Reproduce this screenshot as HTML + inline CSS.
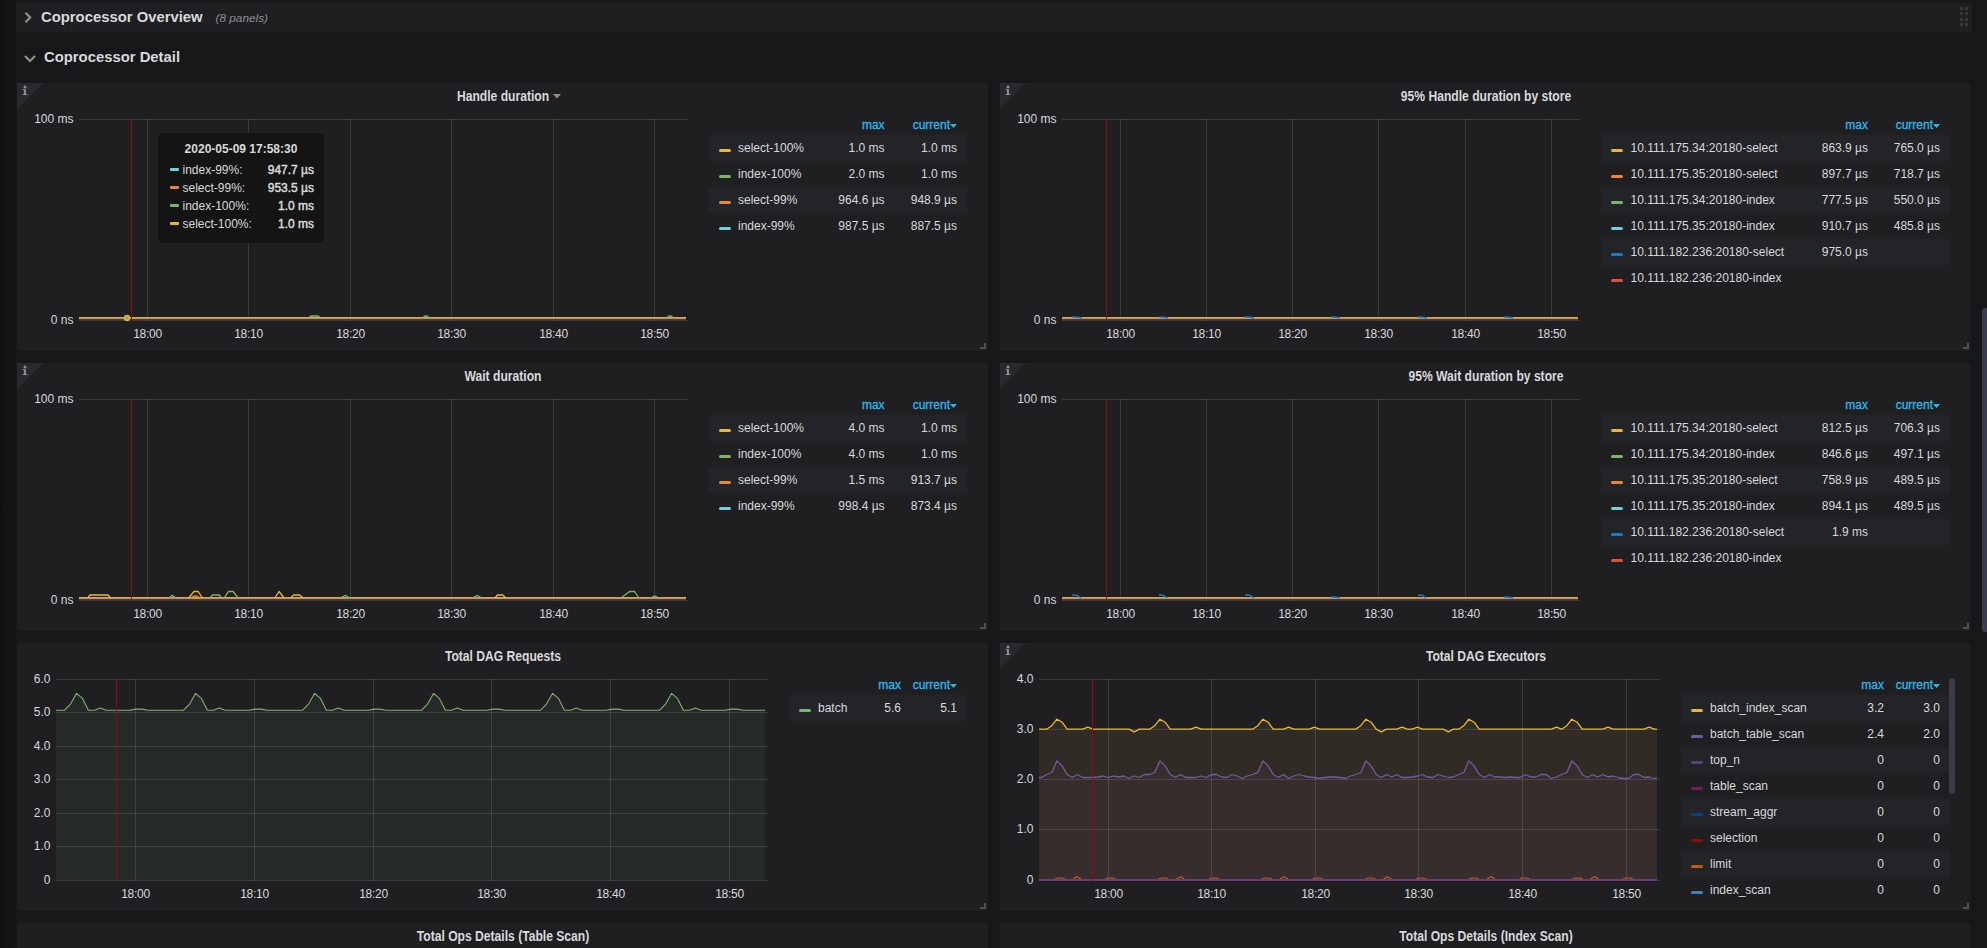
<!DOCTYPE html><html><head><meta charset="utf-8"><title>Grafana - Coprocessor</title><style>
html,body{margin:0;padding:0;width:1987px;height:948px;overflow:hidden;background:#161719;font-family:"Liberation Sans", sans-serif;}
.t{position:absolute;white-space:nowrap;line-height:1.2;}
.ax{letter-spacing:-0.3px;}
.panel{position:absolute;background:#1f1f22;border-radius:3px;}
svg{position:absolute;overflow:visible;}
</style></head><body>
<div style="position:absolute;left:0px;top:0px;width:16px;height:948px;background:linear-gradient(90deg,#0d0e0f 0px,#111214 3px,#141517 16px);"></div>
<div style="position:absolute;left:16px;top:3px;width:1956px;height:29px;background:#1f1f22;"></div>
<svg width="20" height="20" style="left:20px;top:8px"><polyline points="5.5,4.8 10.2,9.5 5.5,14.2" fill="none" stroke="#8e8e8e" stroke-width="2.2"/></svg>
<div class="t" style="left:40.5px;top:7.6px;font-size:15.3px;color:#d8d9da;font-weight:bold;transform:scaleX(0.97);transform-origin:left;">Coprocessor Overview</div>
<div class="t" style="left:215.5px;top:10.7px;font-size:11.8px;color:#8e8e8e;font-weight:normal;font-style:italic;">(8 panels)</div>
<div style="position:absolute;left:1960px;top:7px;width:3px;height:3px;background:#38383b;"></div>
<div style="position:absolute;left:1965px;top:7px;width:3px;height:3px;background:#38383b;"></div>
<div style="position:absolute;left:1960px;top:12px;width:3px;height:3px;background:#38383b;"></div>
<div style="position:absolute;left:1965px;top:12px;width:3px;height:3px;background:#38383b;"></div>
<div style="position:absolute;left:1960px;top:18px;width:3px;height:3px;background:#38383b;"></div>
<div style="position:absolute;left:1965px;top:18px;width:3px;height:3px;background:#38383b;"></div>
<div style="position:absolute;left:1960px;top:23px;width:3px;height:3px;background:#38383b;"></div>
<div style="position:absolute;left:1965px;top:23px;width:3px;height:3px;background:#38383b;"></div>
<svg width="20" height="20" style="left:20px;top:50px"><polyline points="5,6 10,11 15,6" fill="none" stroke="#8e8e8e" stroke-width="2.2"/></svg>
<div class="t" style="left:44.0px;top:47.6px;font-size:15.3px;color:#d8d9da;font-weight:bold;transform:scaleX(0.97);transform-origin:left;">Coprocessor Detail</div>
<div style="position:absolute;left:1982px;top:308px;width:6px;height:324px;background:#3b3d4e;border-radius:3px 0 0 3px;"></div>
<div class="panel" style="left:17px;top:83px;width:971px;height:268px;"></div>
<svg width="30" height="30" style="left:17px;top:83px"><polygon points="0,0 26,0 0,26" fill="#29292d"/><circle cx="8" cy="3.9" r="1.5" fill="#8e8e8e"/><path d="M5.7,6.2 H9 V10.9 H10.2 V12 H5.7 V10.9 H6.9 V7.3 H5.7 Z" fill="#8e8e8e"/></svg>
<svg width="8" height="8" style="left:980px;top:343px"><path d="M4,0 H6 V6 H0 V4 H4 Z" fill="#505053"/></svg>
<div class="t" style="left:202.5px;width:600px;text-align:center;top:87.7px;font-size:14px;color:#d8d9da;font-weight:bold;transform:scaleX(0.865);transform-origin:300px 0;">Handle duration</div>
<svg width="10" height="6" style="left:553px;top:94px"><polygon points="0,0 8,0 4,4.5" fill="#8e8e8e"/></svg>
<svg width="1987" height="948" style="left:0;top:0"><rect x="79" y="119" width="609" height="1" fill="rgba(255,255,255,0.12)"/><rect x="79" y="320" width="609" height="1" fill="rgba(255,255,255,0.12)"/><rect x="147" y="119" width="1" height="202" fill="rgba(255,255,255,0.12)"/><rect x="248" y="119" width="1" height="202" fill="rgba(255,255,255,0.12)"/><rect x="350" y="119" width="1" height="202" fill="rgba(255,255,255,0.12)"/><rect x="451" y="119" width="1" height="202" fill="rgba(255,255,255,0.12)"/><rect x="553" y="119" width="1" height="202" fill="rgba(255,255,255,0.12)"/><rect x="654" y="119" width="1" height="202" fill="rgba(255,255,255,0.12)"/><rect x="79" y="317" width="607" height="1" fill="#d1a65a"/><rect x="79" y="318" width="607" height="1" fill="#e3873e"/><rect x="79" y="319" width="607" height="1" fill="#3b4137"/><polyline points="308.0,318.0 311.0,316.0 318.0,316.0 321.0,318.0" fill="none" stroke="#7eb26d" stroke-width="1.3" stroke-linejoin="round"/><polyline points="422.0,318.0 425.0,316.0 427.0,316.0 430.0,318.0" fill="none" stroke="#7eb26d" stroke-width="1.3" stroke-linejoin="round"/><polyline points="666.0,318.0 669.0,316.0 671.0,316.0 674.0,318.0" fill="none" stroke="#7eb26d" stroke-width="1.3" stroke-linejoin="round"/><rect x="131" y="119" width="1" height="202" fill="#8b0e0e"/></svg>
<div class="t" style="right:1913.5px;top:111.8px;font-size:12px;color:#d8d9da;font-weight:normal;">100 ms</div>
<div class="t" style="right:1913.5px;top:313.3px;font-size:12px;color:#d8d9da;font-weight:normal;">0 ns</div>
<div class="t" style="left:-152.5px;width:600px;text-align:center;top:326.8px;font-size:12px;color:#d8d9da;font-weight:normal;letter-spacing:-0.3px;">18:00</div>
<div class="t" style="left:-51.5px;width:600px;text-align:center;top:326.8px;font-size:12px;color:#d8d9da;font-weight:normal;letter-spacing:-0.3px;">18:10</div>
<div class="t" style="left:50.5px;width:600px;text-align:center;top:326.8px;font-size:12px;color:#d8d9da;font-weight:normal;letter-spacing:-0.3px;">18:20</div>
<div class="t" style="left:151.5px;width:600px;text-align:center;top:326.8px;font-size:12px;color:#d8d9da;font-weight:normal;letter-spacing:-0.3px;">18:30</div>
<div class="t" style="left:253.5px;width:600px;text-align:center;top:326.8px;font-size:12px;color:#d8d9da;font-weight:normal;letter-spacing:-0.3px;">18:40</div>
<div class="t" style="left:354.5px;width:600px;text-align:center;top:326.8px;font-size:12px;color:#d8d9da;font-weight:normal;letter-spacing:-0.3px;">18:50</div>
<div class="t" style="right:1102.4px;top:117.8px;font-size:12px;color:#33b5e5;font-weight:normal;-webkit-text-stroke:0.3px #33b5e5;">max</div>
<div class="t" style="right:1037.0px;top:117.8px;font-size:12px;color:#33b5e5;font-weight:normal;-webkit-text-stroke:0.3px #33b5e5;">current</div>
<svg width="8" height="6" style="left:949.5px;top:123.5px"><polygon points="0,0 7,0 3.5,4" fill="#33b5e5"/></svg>
<div style="position:absolute;left:709px;top:135px;width:258px;height:26px;background:#232427;"></div>
<div style="position:absolute;left:719px;top:149px;width:12px;height:3px;background:#eab839;border-radius:1.5px;"></div>
<div class="t" style="left:738.0px;top:140.8px;font-size:12px;color:#d8d9da;font-weight:normal;">select-100%</div>
<div class="t" style="right:1102.4px;top:140.8px;font-size:12px;color:#d8d9da;font-weight:normal;">1.0 ms</div>
<div class="t" style="right:1030.0px;top:140.8px;font-size:12px;color:#d8d9da;font-weight:normal;">1.0 ms</div>
<div style="position:absolute;left:719px;top:175px;width:12px;height:3px;background:#7eb26d;border-radius:1.5px;"></div>
<div class="t" style="left:738.0px;top:166.8px;font-size:12px;color:#d8d9da;font-weight:normal;">index-100%</div>
<div class="t" style="right:1102.4px;top:166.8px;font-size:12px;color:#d8d9da;font-weight:normal;">2.0 ms</div>
<div class="t" style="right:1030.0px;top:166.8px;font-size:12px;color:#d8d9da;font-weight:normal;">1.0 ms</div>
<div style="position:absolute;left:709px;top:187px;width:258px;height:26px;background:#232427;"></div>
<div style="position:absolute;left:719px;top:201px;width:12px;height:3px;background:#ef843c;border-radius:1.5px;"></div>
<div class="t" style="left:738.0px;top:192.8px;font-size:12px;color:#d8d9da;font-weight:normal;">select-99%</div>
<div class="t" style="right:1102.4px;top:192.8px;font-size:12px;color:#d8d9da;font-weight:normal;">964.6 µs</div>
<div class="t" style="right:1030.0px;top:192.8px;font-size:12px;color:#d8d9da;font-weight:normal;">948.9 µs</div>
<div style="position:absolute;left:719px;top:227px;width:12px;height:3px;background:#6ed0e0;border-radius:1.5px;"></div>
<div class="t" style="left:738.0px;top:218.8px;font-size:12px;color:#d8d9da;font-weight:normal;">index-99%</div>
<div class="t" style="right:1102.4px;top:218.8px;font-size:12px;color:#d8d9da;font-weight:normal;">987.5 µs</div>
<div class="t" style="right:1030.0px;top:218.8px;font-size:12px;color:#d8d9da;font-weight:normal;">887.5 µs</div>
<div class="panel" style="left:17px;top:363px;width:971px;height:268px;"></div>
<svg width="30" height="30" style="left:17px;top:363px"><polygon points="0,0 26,0 0,26" fill="#29292d"/><circle cx="8" cy="3.9" r="1.5" fill="#8e8e8e"/><path d="M5.7,6.2 H9 V10.9 H10.2 V12 H5.7 V10.9 H6.9 V7.3 H5.7 Z" fill="#8e8e8e"/></svg>
<svg width="8" height="8" style="left:980px;top:623px"><path d="M4,0 H6 V6 H0 V4 H4 Z" fill="#505053"/></svg>
<div class="t" style="left:202.5px;width:600px;text-align:center;top:367.7px;font-size:14px;color:#d8d9da;font-weight:bold;transform:scaleX(0.865);transform-origin:300px 0;">Wait duration</div>
<svg width="1987" height="948" style="left:0;top:0"><rect x="79" y="399" width="609" height="1" fill="rgba(255,255,255,0.12)"/><rect x="79" y="600" width="609" height="1" fill="rgba(255,255,255,0.12)"/><rect x="147" y="399" width="1" height="202" fill="rgba(255,255,255,0.12)"/><rect x="248" y="399" width="1" height="202" fill="rgba(255,255,255,0.12)"/><rect x="350" y="399" width="1" height="202" fill="rgba(255,255,255,0.12)"/><rect x="451" y="399" width="1" height="202" fill="rgba(255,255,255,0.12)"/><rect x="553" y="399" width="1" height="202" fill="rgba(255,255,255,0.12)"/><rect x="654" y="399" width="1" height="202" fill="rgba(255,255,255,0.12)"/><rect x="79" y="597" width="607" height="1" fill="#d1a65a"/><rect x="79" y="598" width="607" height="1" fill="#e3873e"/><rect x="79" y="599" width="607" height="1" fill="#3b4137"/><polyline points="87.7,598.0 90.0,595.0 108.0,595.0 110.6,598.0" fill="none" stroke="#eab839" stroke-width="1.3" stroke-linejoin="round"/><polyline points="169.0,598.0 172.0,595.5 172.5,595.5 176.0,598.0" fill="none" stroke="#7eb26d" stroke-width="1.3" stroke-linejoin="round"/><polyline points="188.5,598.0 194.0,591.5 198.2,591.5 202.4,598.0" fill="none" stroke="#eab839" stroke-width="1.3" stroke-linejoin="round"/><polyline points="190.0,598.0 194.0,596.0 197.0,596.0 200.0,598.0" fill="none" stroke="#ef843c" stroke-width="1.3" stroke-linejoin="round"/><polyline points="209.7,598.0 212.7,595.0 219.3,595.0 221.7,598.0" fill="none" stroke="#7eb26d" stroke-width="1.3" stroke-linejoin="round"/><polyline points="224.2,598.0 228.4,591.5 233.2,591.5 238.0,598.0" fill="none" stroke="#7eb26d" stroke-width="1.3" stroke-linejoin="round"/><polyline points="274.9,598.0 279.1,591.5 279.1,591.5 284.0,598.0" fill="none" stroke="#eab839" stroke-width="1.3" stroke-linejoin="round"/><polyline points="290.6,598.0 293.6,595.0 299.6,595.0 303.3,598.0" fill="none" stroke="#eab839" stroke-width="1.3" stroke-linejoin="round"/><polyline points="340.0,598.0 345.0,595.5 345.5,595.5 350.0,598.0" fill="none" stroke="#7eb26d" stroke-width="1.3" stroke-linejoin="round"/><polyline points="472.0,598.0 477.0,595.5 477.5,595.5 482.0,598.0" fill="none" stroke="#7eb26d" stroke-width="1.3" stroke-linejoin="round"/><polyline points="495.0,598.0 497.4,595.0 502.8,595.0 505.8,598.0" fill="none" stroke="#eab839" stroke-width="1.3" stroke-linejoin="round"/><polyline points="620.9,598.0 629.6,591.5 634.5,591.5 639.0,598.0" fill="none" stroke="#7eb26d" stroke-width="1.3" stroke-linejoin="round"/><polyline points="650.0,598.0 654.5,596.0 655.0,596.0 659.0,598.0" fill="none" stroke="#7eb26d" stroke-width="1.3" stroke-linejoin="round"/><rect x="131" y="399" width="1" height="202" fill="#8b0e0e"/></svg>
<div class="t" style="right:1913.5px;top:391.8px;font-size:12px;color:#d8d9da;font-weight:normal;">100 ms</div>
<div class="t" style="right:1913.5px;top:593.3px;font-size:12px;color:#d8d9da;font-weight:normal;">0 ns</div>
<div class="t" style="left:-152.5px;width:600px;text-align:center;top:606.8px;font-size:12px;color:#d8d9da;font-weight:normal;letter-spacing:-0.3px;">18:00</div>
<div class="t" style="left:-51.5px;width:600px;text-align:center;top:606.8px;font-size:12px;color:#d8d9da;font-weight:normal;letter-spacing:-0.3px;">18:10</div>
<div class="t" style="left:50.5px;width:600px;text-align:center;top:606.8px;font-size:12px;color:#d8d9da;font-weight:normal;letter-spacing:-0.3px;">18:20</div>
<div class="t" style="left:151.5px;width:600px;text-align:center;top:606.8px;font-size:12px;color:#d8d9da;font-weight:normal;letter-spacing:-0.3px;">18:30</div>
<div class="t" style="left:253.5px;width:600px;text-align:center;top:606.8px;font-size:12px;color:#d8d9da;font-weight:normal;letter-spacing:-0.3px;">18:40</div>
<div class="t" style="left:354.5px;width:600px;text-align:center;top:606.8px;font-size:12px;color:#d8d9da;font-weight:normal;letter-spacing:-0.3px;">18:50</div>
<div class="t" style="right:1102.4px;top:397.8px;font-size:12px;color:#33b5e5;font-weight:normal;-webkit-text-stroke:0.3px #33b5e5;">max</div>
<div class="t" style="right:1037.0px;top:397.8px;font-size:12px;color:#33b5e5;font-weight:normal;-webkit-text-stroke:0.3px #33b5e5;">current</div>
<svg width="8" height="6" style="left:949.5px;top:403.5px"><polygon points="0,0 7,0 3.5,4" fill="#33b5e5"/></svg>
<div style="position:absolute;left:709px;top:415px;width:258px;height:26px;background:#232427;"></div>
<div style="position:absolute;left:719px;top:429px;width:12px;height:3px;background:#eab839;border-radius:1.5px;"></div>
<div class="t" style="left:738.0px;top:420.8px;font-size:12px;color:#d8d9da;font-weight:normal;">select-100%</div>
<div class="t" style="right:1102.4px;top:420.8px;font-size:12px;color:#d8d9da;font-weight:normal;">4.0 ms</div>
<div class="t" style="right:1030.0px;top:420.8px;font-size:12px;color:#d8d9da;font-weight:normal;">1.0 ms</div>
<div style="position:absolute;left:719px;top:455px;width:12px;height:3px;background:#7eb26d;border-radius:1.5px;"></div>
<div class="t" style="left:738.0px;top:446.8px;font-size:12px;color:#d8d9da;font-weight:normal;">index-100%</div>
<div class="t" style="right:1102.4px;top:446.8px;font-size:12px;color:#d8d9da;font-weight:normal;">4.0 ms</div>
<div class="t" style="right:1030.0px;top:446.8px;font-size:12px;color:#d8d9da;font-weight:normal;">1.0 ms</div>
<div style="position:absolute;left:709px;top:467px;width:258px;height:26px;background:#232427;"></div>
<div style="position:absolute;left:719px;top:481px;width:12px;height:3px;background:#ef843c;border-radius:1.5px;"></div>
<div class="t" style="left:738.0px;top:472.8px;font-size:12px;color:#d8d9da;font-weight:normal;">select-99%</div>
<div class="t" style="right:1102.4px;top:472.8px;font-size:12px;color:#d8d9da;font-weight:normal;">1.5 ms</div>
<div class="t" style="right:1030.0px;top:472.8px;font-size:12px;color:#d8d9da;font-weight:normal;">913.7 µs</div>
<div style="position:absolute;left:719px;top:507px;width:12px;height:3px;background:#6ed0e0;border-radius:1.5px;"></div>
<div class="t" style="left:738.0px;top:498.8px;font-size:12px;color:#d8d9da;font-weight:normal;">index-99%</div>
<div class="t" style="right:1102.4px;top:498.8px;font-size:12px;color:#d8d9da;font-weight:normal;">998.4 µs</div>
<div class="t" style="right:1030.0px;top:498.8px;font-size:12px;color:#d8d9da;font-weight:normal;">873.4 µs</div>
<div class="panel" style="left:1000px;top:83px;width:971px;height:268px;"></div>
<svg width="30" height="30" style="left:1000px;top:83px"><polygon points="0,0 26,0 0,26" fill="#29292d"/><circle cx="8" cy="3.9" r="1.5" fill="#8e8e8e"/><path d="M5.7,6.2 H9 V10.9 H10.2 V12 H5.7 V10.9 H6.9 V7.3 H5.7 Z" fill="#8e8e8e"/></svg>
<svg width="8" height="8" style="left:1963px;top:343px"><path d="M4,0 H6 V6 H0 V4 H4 Z" fill="#505053"/></svg>
<div class="t" style="left:1185.5px;width:600px;text-align:center;top:87.7px;font-size:14px;color:#d8d9da;font-weight:bold;transform:scaleX(0.865);transform-origin:300px 0;">95% Handle duration by store</div>
<svg width="1987" height="948" style="left:0;top:0"><rect x="1062" y="119" width="518" height="1" fill="rgba(255,255,255,0.12)"/><rect x="1062" y="320" width="518" height="1" fill="rgba(255,255,255,0.12)"/><rect x="1120" y="119" width="1" height="202" fill="rgba(255,255,255,0.12)"/><rect x="1206" y="119" width="1" height="202" fill="rgba(255,255,255,0.12)"/><rect x="1292" y="119" width="1" height="202" fill="rgba(255,255,255,0.12)"/><rect x="1378" y="119" width="1" height="202" fill="rgba(255,255,255,0.12)"/><rect x="1465" y="119" width="1" height="202" fill="rgba(255,255,255,0.12)"/><rect x="1551" y="119" width="1" height="202" fill="rgba(255,255,255,0.12)"/><rect x="1062" y="317" width="516" height="1" fill="#d1a65a"/><rect x="1062" y="318" width="516" height="1" fill="#e3873e"/><rect x="1062" y="319" width="516" height="1" fill="#3b4137"/><polyline points="1072.0,317.0 1077.5,317.3 1082.0,318.0" fill="none" stroke="#1f78c1" stroke-width="1.5" stroke-linejoin="round"/><polyline points="1159.0,317.0 1164.0,317.3 1168.0,318.0" fill="none" stroke="#1f78c1" stroke-width="1.5" stroke-linejoin="round"/><polyline points="1245.0,317.0 1250.0,317.3 1254.0,318.0" fill="none" stroke="#1f78c1" stroke-width="1.5" stroke-linejoin="round"/><polyline points="1331.0,317.0 1336.0,317.3 1340.0,318.0" fill="none" stroke="#1f78c1" stroke-width="1.5" stroke-linejoin="round"/><polyline points="1418.0,317.0 1423.0,317.3 1427.0,318.0" fill="none" stroke="#1f78c1" stroke-width="1.5" stroke-linejoin="round"/><polyline points="1504.0,317.0 1509.0,317.3 1513.0,318.0" fill="none" stroke="#1f78c1" stroke-width="1.5" stroke-linejoin="round"/><rect x="1106" y="119" width="1" height="202" fill="#8b0e0e"/></svg>
<div class="t" style="right:930.5px;top:111.8px;font-size:12px;color:#d8d9da;font-weight:normal;">100 ms</div>
<div class="t" style="right:930.5px;top:313.3px;font-size:12px;color:#d8d9da;font-weight:normal;">0 ns</div>
<div class="t" style="left:820.5px;width:600px;text-align:center;top:326.8px;font-size:12px;color:#d8d9da;font-weight:normal;letter-spacing:-0.3px;">18:00</div>
<div class="t" style="left:906.5px;width:600px;text-align:center;top:326.8px;font-size:12px;color:#d8d9da;font-weight:normal;letter-spacing:-0.3px;">18:10</div>
<div class="t" style="left:992.5px;width:600px;text-align:center;top:326.8px;font-size:12px;color:#d8d9da;font-weight:normal;letter-spacing:-0.3px;">18:20</div>
<div class="t" style="left:1078.5px;width:600px;text-align:center;top:326.8px;font-size:12px;color:#d8d9da;font-weight:normal;letter-spacing:-0.3px;">18:30</div>
<div class="t" style="left:1165.5px;width:600px;text-align:center;top:326.8px;font-size:12px;color:#d8d9da;font-weight:normal;letter-spacing:-0.3px;">18:40</div>
<div class="t" style="left:1251.5px;width:600px;text-align:center;top:326.8px;font-size:12px;color:#d8d9da;font-weight:normal;letter-spacing:-0.3px;">18:50</div>
<div class="t" style="right:119.0px;top:117.8px;font-size:12px;color:#33b5e5;font-weight:normal;-webkit-text-stroke:0.3px #33b5e5;">max</div>
<div class="t" style="right:54.0px;top:117.8px;font-size:12px;color:#33b5e5;font-weight:normal;-webkit-text-stroke:0.3px #33b5e5;">current</div>
<svg width="8" height="6" style="left:1932.5px;top:123.5px"><polygon points="0,0 7,0 3.5,4" fill="#33b5e5"/></svg>
<div style="position:absolute;left:1601px;top:135px;width:349px;height:26px;background:#232427;"></div>
<div style="position:absolute;left:1611px;top:149px;width:12px;height:3px;background:#eab839;border-radius:1.5px;"></div>
<div class="t" style="left:1630.5px;top:140.8px;font-size:12px;color:#d8d9da;font-weight:normal;">10.111.175.34:20180-select</div>
<div class="t" style="right:119.0px;top:140.8px;font-size:12px;color:#d8d9da;font-weight:normal;">863.9 µs</div>
<div class="t" style="right:47.0px;top:140.8px;font-size:12px;color:#d8d9da;font-weight:normal;">765.0 µs</div>
<div style="position:absolute;left:1611px;top:175px;width:12px;height:3px;background:#ef843c;border-radius:1.5px;"></div>
<div class="t" style="left:1630.5px;top:166.8px;font-size:12px;color:#d8d9da;font-weight:normal;">10.111.175.35:20180-select</div>
<div class="t" style="right:119.0px;top:166.8px;font-size:12px;color:#d8d9da;font-weight:normal;">897.7 µs</div>
<div class="t" style="right:47.0px;top:166.8px;font-size:12px;color:#d8d9da;font-weight:normal;">718.7 µs</div>
<div style="position:absolute;left:1601px;top:187px;width:349px;height:26px;background:#232427;"></div>
<div style="position:absolute;left:1611px;top:201px;width:12px;height:3px;background:#7eb26d;border-radius:1.5px;"></div>
<div class="t" style="left:1630.5px;top:192.8px;font-size:12px;color:#d8d9da;font-weight:normal;">10.111.175.34:20180-index</div>
<div class="t" style="right:119.0px;top:192.8px;font-size:12px;color:#d8d9da;font-weight:normal;">777.5 µs</div>
<div class="t" style="right:47.0px;top:192.8px;font-size:12px;color:#d8d9da;font-weight:normal;">550.0 µs</div>
<div style="position:absolute;left:1611px;top:227px;width:12px;height:3px;background:#6ed0e0;border-radius:1.5px;"></div>
<div class="t" style="left:1630.5px;top:218.8px;font-size:12px;color:#d8d9da;font-weight:normal;">10.111.175.35:20180-index</div>
<div class="t" style="right:119.0px;top:218.8px;font-size:12px;color:#d8d9da;font-weight:normal;">910.7 µs</div>
<div class="t" style="right:47.0px;top:218.8px;font-size:12px;color:#d8d9da;font-weight:normal;">485.8 µs</div>
<div style="position:absolute;left:1601px;top:239px;width:349px;height:26px;background:#232427;"></div>
<div style="position:absolute;left:1611px;top:253px;width:12px;height:3px;background:#1f78c1;border-radius:1.5px;"></div>
<div class="t" style="left:1630.5px;top:244.8px;font-size:12px;color:#d8d9da;font-weight:normal;">10.111.182.236:20180-select</div>
<div class="t" style="right:119.0px;top:244.8px;font-size:12px;color:#d8d9da;font-weight:normal;">975.0 µs</div>
<div style="position:absolute;left:1611px;top:279px;width:12px;height:3px;background:#e24d42;border-radius:1.5px;"></div>
<div class="t" style="left:1630.5px;top:270.8px;font-size:12px;color:#d8d9da;font-weight:normal;">10.111.182.236:20180-index</div>
<div class="panel" style="left:1000px;top:363px;width:971px;height:268px;"></div>
<svg width="30" height="30" style="left:1000px;top:363px"><polygon points="0,0 26,0 0,26" fill="#29292d"/><circle cx="8" cy="3.9" r="1.5" fill="#8e8e8e"/><path d="M5.7,6.2 H9 V10.9 H10.2 V12 H5.7 V10.9 H6.9 V7.3 H5.7 Z" fill="#8e8e8e"/></svg>
<svg width="8" height="8" style="left:1963px;top:623px"><path d="M4,0 H6 V6 H0 V4 H4 Z" fill="#505053"/></svg>
<div class="t" style="left:1185.5px;width:600px;text-align:center;top:367.7px;font-size:14px;color:#d8d9da;font-weight:bold;transform:scaleX(0.865);transform-origin:300px 0;">95% Wait duration by store</div>
<svg width="1987" height="948" style="left:0;top:0"><rect x="1062" y="399" width="518" height="1" fill="rgba(255,255,255,0.12)"/><rect x="1062" y="600" width="518" height="1" fill="rgba(255,255,255,0.12)"/><rect x="1120" y="399" width="1" height="202" fill="rgba(255,255,255,0.12)"/><rect x="1206" y="399" width="1" height="202" fill="rgba(255,255,255,0.12)"/><rect x="1292" y="399" width="1" height="202" fill="rgba(255,255,255,0.12)"/><rect x="1378" y="399" width="1" height="202" fill="rgba(255,255,255,0.12)"/><rect x="1465" y="399" width="1" height="202" fill="rgba(255,255,255,0.12)"/><rect x="1551" y="399" width="1" height="202" fill="rgba(255,255,255,0.12)"/><rect x="1062" y="597" width="516" height="1" fill="#d1a65a"/><rect x="1062" y="598" width="516" height="1" fill="#e3873e"/><rect x="1062" y="599" width="516" height="1" fill="#3b4137"/><polyline points="1072.0,595.0 1077.0,595.3 1081.0,598.0" fill="none" stroke="#1f78c1" stroke-width="1.5" stroke-linejoin="round"/><polyline points="1159.0,595.0 1163.4,595.3 1167.0,598.0" fill="none" stroke="#1f78c1" stroke-width="1.5" stroke-linejoin="round"/><polyline points="1245.0,595.0 1250.0,595.3 1254.0,598.0" fill="none" stroke="#1f78c1" stroke-width="1.5" stroke-linejoin="round"/><polyline points="1331.0,597.0 1336.0,597.3 1340.0,598.0" fill="none" stroke="#1f78c1" stroke-width="1.5" stroke-linejoin="round"/><polyline points="1418.0,595.0 1422.4,595.3 1426.0,598.0" fill="none" stroke="#1f78c1" stroke-width="1.5" stroke-linejoin="round"/><polyline points="1504.0,597.0 1509.0,597.3 1513.0,598.0" fill="none" stroke="#1f78c1" stroke-width="1.5" stroke-linejoin="round"/><rect x="1106" y="399" width="1" height="202" fill="#8b0e0e"/></svg>
<div class="t" style="right:930.5px;top:391.8px;font-size:12px;color:#d8d9da;font-weight:normal;">100 ms</div>
<div class="t" style="right:930.5px;top:593.3px;font-size:12px;color:#d8d9da;font-weight:normal;">0 ns</div>
<div class="t" style="left:820.5px;width:600px;text-align:center;top:606.8px;font-size:12px;color:#d8d9da;font-weight:normal;letter-spacing:-0.3px;">18:00</div>
<div class="t" style="left:906.5px;width:600px;text-align:center;top:606.8px;font-size:12px;color:#d8d9da;font-weight:normal;letter-spacing:-0.3px;">18:10</div>
<div class="t" style="left:992.5px;width:600px;text-align:center;top:606.8px;font-size:12px;color:#d8d9da;font-weight:normal;letter-spacing:-0.3px;">18:20</div>
<div class="t" style="left:1078.5px;width:600px;text-align:center;top:606.8px;font-size:12px;color:#d8d9da;font-weight:normal;letter-spacing:-0.3px;">18:30</div>
<div class="t" style="left:1165.5px;width:600px;text-align:center;top:606.8px;font-size:12px;color:#d8d9da;font-weight:normal;letter-spacing:-0.3px;">18:40</div>
<div class="t" style="left:1251.5px;width:600px;text-align:center;top:606.8px;font-size:12px;color:#d8d9da;font-weight:normal;letter-spacing:-0.3px;">18:50</div>
<div class="t" style="right:119.0px;top:397.8px;font-size:12px;color:#33b5e5;font-weight:normal;-webkit-text-stroke:0.3px #33b5e5;">max</div>
<div class="t" style="right:54.0px;top:397.8px;font-size:12px;color:#33b5e5;font-weight:normal;-webkit-text-stroke:0.3px #33b5e5;">current</div>
<svg width="8" height="6" style="left:1932.5px;top:403.5px"><polygon points="0,0 7,0 3.5,4" fill="#33b5e5"/></svg>
<div style="position:absolute;left:1601px;top:415px;width:349px;height:26px;background:#232427;"></div>
<div style="position:absolute;left:1611px;top:429px;width:12px;height:3px;background:#eab839;border-radius:1.5px;"></div>
<div class="t" style="left:1630.5px;top:420.8px;font-size:12px;color:#d8d9da;font-weight:normal;">10.111.175.34:20180-select</div>
<div class="t" style="right:119.0px;top:420.8px;font-size:12px;color:#d8d9da;font-weight:normal;">812.5 µs</div>
<div class="t" style="right:47.0px;top:420.8px;font-size:12px;color:#d8d9da;font-weight:normal;">706.3 µs</div>
<div style="position:absolute;left:1611px;top:455px;width:12px;height:3px;background:#7eb26d;border-radius:1.5px;"></div>
<div class="t" style="left:1630.5px;top:446.8px;font-size:12px;color:#d8d9da;font-weight:normal;">10.111.175.34:20180-index</div>
<div class="t" style="right:119.0px;top:446.8px;font-size:12px;color:#d8d9da;font-weight:normal;">846.6 µs</div>
<div class="t" style="right:47.0px;top:446.8px;font-size:12px;color:#d8d9da;font-weight:normal;">497.1 µs</div>
<div style="position:absolute;left:1601px;top:467px;width:349px;height:26px;background:#232427;"></div>
<div style="position:absolute;left:1611px;top:481px;width:12px;height:3px;background:#ef843c;border-radius:1.5px;"></div>
<div class="t" style="left:1630.5px;top:472.8px;font-size:12px;color:#d8d9da;font-weight:normal;">10.111.175.35:20180-select</div>
<div class="t" style="right:119.0px;top:472.8px;font-size:12px;color:#d8d9da;font-weight:normal;">758.9 µs</div>
<div class="t" style="right:47.0px;top:472.8px;font-size:12px;color:#d8d9da;font-weight:normal;">489.5 µs</div>
<div style="position:absolute;left:1611px;top:507px;width:12px;height:3px;background:#6ed0e0;border-radius:1.5px;"></div>
<div class="t" style="left:1630.5px;top:498.8px;font-size:12px;color:#d8d9da;font-weight:normal;">10.111.175.35:20180-index</div>
<div class="t" style="right:119.0px;top:498.8px;font-size:12px;color:#d8d9da;font-weight:normal;">894.1 µs</div>
<div class="t" style="right:47.0px;top:498.8px;font-size:12px;color:#d8d9da;font-weight:normal;">489.5 µs</div>
<div style="position:absolute;left:1601px;top:519px;width:349px;height:26px;background:#232427;"></div>
<div style="position:absolute;left:1611px;top:533px;width:12px;height:3px;background:#1f78c1;border-radius:1.5px;"></div>
<div class="t" style="left:1630.5px;top:524.8px;font-size:12px;color:#d8d9da;font-weight:normal;">10.111.182.236:20180-select</div>
<div class="t" style="right:119.0px;top:524.8px;font-size:12px;color:#d8d9da;font-weight:normal;">1.9 ms</div>
<div style="position:absolute;left:1611px;top:559px;width:12px;height:3px;background:#e24d42;border-radius:1.5px;"></div>
<div class="t" style="left:1630.5px;top:550.8px;font-size:12px;color:#d8d9da;font-weight:normal;">10.111.182.236:20180-index</div>
<div style="position:absolute;left:158px;top:133px;width:166px;height:110px;background:#141414;border-radius:5px;"></div>
<div class="t" style="left:-59.0px;width:600px;text-align:center;top:141.8px;font-size:12px;color:#d8d9da;font-weight:bold;">2020-05-09 17:58:30</div>
<div style="position:absolute;left:170px;top:168px;width:9px;height:3px;background:#6ed0e0;border-radius:1px;"></div>
<div class="t" style="left:182.5px;top:162.8px;font-size:12px;color:#d8d9da;font-weight:normal;">index-99%:</div>
<div class="t" style="right:1673.0px;top:162.8px;font-size:12px;color:#d8d9da;font-weight:normal;-webkit-text-stroke:0.45px #d8d9da;">947.7 µs</div>
<div style="position:absolute;left:170px;top:186px;width:9px;height:3px;background:#ef843c;border-radius:1px;"></div>
<div class="t" style="left:182.5px;top:180.8px;font-size:12px;color:#d8d9da;font-weight:normal;">select-99%:</div>
<div class="t" style="right:1673.0px;top:180.8px;font-size:12px;color:#d8d9da;font-weight:normal;-webkit-text-stroke:0.45px #d8d9da;">953.5 µs</div>
<div style="position:absolute;left:170px;top:204px;width:9px;height:3px;background:#7eb26d;border-radius:1px;"></div>
<div class="t" style="left:182.5px;top:198.8px;font-size:12px;color:#d8d9da;font-weight:normal;">index-100%:</div>
<div class="t" style="right:1673.0px;top:198.8px;font-size:12px;color:#d8d9da;font-weight:normal;-webkit-text-stroke:0.45px #d8d9da;">1.0 ms</div>
<div style="position:absolute;left:170px;top:222px;width:9px;height:3px;background:#eab839;border-radius:1px;"></div>
<div class="t" style="left:182.5px;top:216.8px;font-size:12px;color:#d8d9da;font-weight:normal;">select-100%:</div>
<div class="t" style="right:1673.0px;top:216.8px;font-size:12px;color:#d8d9da;font-weight:normal;-webkit-text-stroke:0.45px #d8d9da;">1.0 ms</div>
<svg width="10" height="10" style="left:122px;top:313px"><circle cx="5" cy="5" r="3.2" fill="#c9b54e"/><circle cx="5" cy="5" r="1.2" fill="#b89545"/></svg>
<div class="panel" style="left:17px;top:643px;width:971px;height:268px;"></div>
<svg width="8" height="8" style="left:980px;top:903px"><path d="M4,0 H6 V6 H0 V4 H4 Z" fill="#505053"/></svg>
<div class="t" style="left:202.5px;width:600px;text-align:center;top:647.7px;font-size:14px;color:#d8d9da;font-weight:bold;transform:scaleX(0.865);transform-origin:300px 0;">Total DAG Requests</div>
<svg width="1987" height="948" style="left:0;top:0"><polygon points="56,880 56.0,710.2 58.6,710.2 64.6,710.2 70.5,704.1 76.5,693.4 82.5,698.4 88.4,710.2 94.3,710.2 100.3,708.1 106.2,710.2 112.2,710.2 118.2,710.2 124.1,710.2 130.1,710.2 136.0,709.1 141.9,709.1 147.9,710.2 153.9,710.2 159.8,710.2 165.8,710.2 171.7,710.2 177.7,710.2 183.6,710.2 189.6,704.1 195.5,693.4 201.4,698.4 207.4,710.2 213.3,710.2 219.3,708.1 225.2,710.2 231.2,710.2 237.2,710.2 243.1,710.2 249.1,710.2 255.0,709.1 261.0,709.1 266.9,710.2 272.9,710.2 278.8,710.2 284.8,710.2 290.7,710.2 296.6,710.2 302.6,710.2 308.6,704.1 314.5,693.4 320.5,698.4 326.4,710.2 332.4,710.2 338.3,708.1 344.2,710.2 350.2,710.2 356.2,710.2 362.1,710.2 368.1,710.2 374.0,709.1 379.9,709.1 385.9,710.2 391.9,710.2 397.8,710.2 403.8,710.2 409.7,710.2 415.7,710.2 421.6,710.2 427.6,704.1 433.5,693.4 439.4,698.4 445.4,710.2 451.4,710.2 457.3,708.1 463.2,710.2 469.2,710.2 475.2,710.2 481.1,710.2 487.1,710.2 493.0,709.1 498.9,709.1 504.9,710.2 510.9,710.2 516.8,710.2 522.8,710.2 528.7,710.2 534.7,710.2 540.6,710.2 546.5,704.1 552.5,693.4 558.5,698.4 564.4,710.2 570.4,710.2 576.3,708.1 582.2,710.2 588.2,710.2 594.1,710.2 600.1,710.2 606.1,710.2 612.0,709.1 618.0,709.1 623.9,710.2 629.9,710.2 635.8,710.2 641.8,710.2 647.7,710.2 653.6,710.2 659.6,710.2 665.6,704.1 671.5,693.4 677.5,698.4 683.4,710.2 689.4,710.2 695.3,708.1 701.2,710.2 707.2,710.2 713.1,710.2 719.1,710.2 725.1,710.2 731.0,709.1 737.0,709.1 742.9,710.2 748.9,710.2 754.8,710.2 760.8,710.2 765.0,710.2 765.0,880" fill="rgba(126,178,109,0.075)"/><rect x="56" y="880" width="712" height="1" fill="rgba(255,255,255,0.12)"/><rect x="56" y="846" width="712" height="1" fill="rgba(255,255,255,0.12)"/><rect x="56" y="813" width="712" height="1" fill="rgba(255,255,255,0.12)"/><rect x="56" y="779" width="712" height="1" fill="rgba(255,255,255,0.12)"/><rect x="56" y="746" width="712" height="1" fill="rgba(255,255,255,0.12)"/><rect x="56" y="712" width="712" height="1" fill="rgba(255,255,255,0.12)"/><rect x="56" y="679" width="712" height="1" fill="rgba(255,255,255,0.12)"/><rect x="135" y="679" width="1" height="202" fill="rgba(255,255,255,0.12)"/><rect x="254" y="679" width="1" height="202" fill="rgba(255,255,255,0.12)"/><rect x="373" y="679" width="1" height="202" fill="rgba(255,255,255,0.12)"/><rect x="491" y="679" width="1" height="202" fill="rgba(255,255,255,0.12)"/><rect x="610" y="679" width="1" height="202" fill="rgba(255,255,255,0.12)"/><rect x="729" y="679" width="1" height="202" fill="rgba(255,255,255,0.12)"/><polyline points="56.0,710.2 58.6,710.2 64.6,710.2 70.5,704.1 76.5,693.4 82.5,698.4 88.4,710.2 94.3,710.2 100.3,708.1 106.2,710.2 112.2,710.2 118.2,710.2 124.1,710.2 130.1,710.2 136.0,709.1 141.9,709.1 147.9,710.2 153.9,710.2 159.8,710.2 165.8,710.2 171.7,710.2 177.7,710.2 183.6,710.2 189.6,704.1 195.5,693.4 201.4,698.4 207.4,710.2 213.3,710.2 219.3,708.1 225.2,710.2 231.2,710.2 237.2,710.2 243.1,710.2 249.1,710.2 255.0,709.1 261.0,709.1 266.9,710.2 272.9,710.2 278.8,710.2 284.8,710.2 290.7,710.2 296.6,710.2 302.6,710.2 308.6,704.1 314.5,693.4 320.5,698.4 326.4,710.2 332.4,710.2 338.3,708.1 344.2,710.2 350.2,710.2 356.2,710.2 362.1,710.2 368.1,710.2 374.0,709.1 379.9,709.1 385.9,710.2 391.9,710.2 397.8,710.2 403.8,710.2 409.7,710.2 415.7,710.2 421.6,710.2 427.6,704.1 433.5,693.4 439.4,698.4 445.4,710.2 451.4,710.2 457.3,708.1 463.2,710.2 469.2,710.2 475.2,710.2 481.1,710.2 487.1,710.2 493.0,709.1 498.9,709.1 504.9,710.2 510.9,710.2 516.8,710.2 522.8,710.2 528.7,710.2 534.7,710.2 540.6,710.2 546.5,704.1 552.5,693.4 558.5,698.4 564.4,710.2 570.4,710.2 576.3,708.1 582.2,710.2 588.2,710.2 594.1,710.2 600.1,710.2 606.1,710.2 612.0,709.1 618.0,709.1 623.9,710.2 629.9,710.2 635.8,710.2 641.8,710.2 647.7,710.2 653.6,710.2 659.6,710.2 665.6,704.1 671.5,693.4 677.5,698.4 683.4,710.2 689.4,710.2 695.3,708.1 701.2,710.2 707.2,710.2 713.1,710.2 719.1,710.2 725.1,710.2 731.0,709.1 737.0,709.1 742.9,710.2 748.9,710.2 754.8,710.2 760.8,710.2 765.0,710.2" fill="none" stroke="#7eb26d" stroke-width="1.1" stroke-linejoin="round"/><rect x="116" y="679" width="1" height="202" fill="#8b0e0e"/></svg>
<div class="t" style="right:1936.5px;top:873.3px;font-size:12px;color:#d8d9da;font-weight:normal;">0</div>
<div class="t" style="right:1936.5px;top:839.3px;font-size:12px;color:#d8d9da;font-weight:normal;">1.0</div>
<div class="t" style="right:1936.5px;top:806.3px;font-size:12px;color:#d8d9da;font-weight:normal;">2.0</div>
<div class="t" style="right:1936.5px;top:772.3px;font-size:12px;color:#d8d9da;font-weight:normal;">3.0</div>
<div class="t" style="right:1936.5px;top:739.3px;font-size:12px;color:#d8d9da;font-weight:normal;">4.0</div>
<div class="t" style="right:1936.5px;top:705.3px;font-size:12px;color:#d8d9da;font-weight:normal;">5.0</div>
<div class="t" style="right:1936.5px;top:672.3px;font-size:12px;color:#d8d9da;font-weight:normal;">6.0</div>
<div class="t" style="left:-164.5px;width:600px;text-align:center;top:886.8px;font-size:12px;color:#d8d9da;font-weight:normal;letter-spacing:-0.3px;">18:00</div>
<div class="t" style="left:-45.5px;width:600px;text-align:center;top:886.8px;font-size:12px;color:#d8d9da;font-weight:normal;letter-spacing:-0.3px;">18:10</div>
<div class="t" style="left:73.5px;width:600px;text-align:center;top:886.8px;font-size:12px;color:#d8d9da;font-weight:normal;letter-spacing:-0.3px;">18:20</div>
<div class="t" style="left:191.5px;width:600px;text-align:center;top:886.8px;font-size:12px;color:#d8d9da;font-weight:normal;letter-spacing:-0.3px;">18:30</div>
<div class="t" style="left:310.5px;width:600px;text-align:center;top:886.8px;font-size:12px;color:#d8d9da;font-weight:normal;letter-spacing:-0.3px;">18:40</div>
<div class="t" style="left:429.5px;width:600px;text-align:center;top:886.8px;font-size:12px;color:#d8d9da;font-weight:normal;letter-spacing:-0.3px;">18:50</div>
<div class="t" style="right:1086.0px;top:677.8px;font-size:12px;color:#33b5e5;font-weight:normal;-webkit-text-stroke:0.3px #33b5e5;">max</div>
<div class="t" style="right:1037.0px;top:677.8px;font-size:12px;color:#33b5e5;font-weight:normal;-webkit-text-stroke:0.3px #33b5e5;">current</div>
<svg width="8" height="6" style="left:949.5px;top:683.5px"><polygon points="0,0 7,0 3.5,4" fill="#33b5e5"/></svg>
<div style="position:absolute;left:789px;top:695px;width:177px;height:26px;background:#232427;"></div>
<div style="position:absolute;left:799px;top:709px;width:12px;height:3px;background:#7eb26d;border-radius:1.5px;"></div>
<div class="t" style="left:818.0px;top:700.8px;font-size:12px;color:#d8d9da;font-weight:normal;">batch</div>
<div class="t" style="right:1086.0px;top:700.8px;font-size:12px;color:#d8d9da;font-weight:normal;">5.6</div>
<div class="t" style="right:1030.0px;top:700.8px;font-size:12px;color:#d8d9da;font-weight:normal;">5.1</div>
<div class="panel" style="left:1000px;top:643px;width:971px;height:268px;"></div>
<svg width="30" height="30" style="left:1000px;top:643px"><polygon points="0,0 26,0 0,26" fill="#29292d"/><circle cx="8" cy="3.9" r="1.5" fill="#8e8e8e"/><path d="M5.7,6.2 H9 V10.9 H10.2 V12 H5.7 V10.9 H6.9 V7.3 H5.7 Z" fill="#8e8e8e"/></svg>
<svg width="8" height="8" style="left:1963px;top:903px"><path d="M4,0 H6 V6 H0 V4 H4 Z" fill="#505053"/></svg>
<div class="t" style="left:1185.5px;width:600px;text-align:center;top:647.7px;font-size:14px;color:#d8d9da;font-weight:bold;transform:scaleX(0.865);transform-origin:300px 0;">Total DAG Executors</div>
<svg width="1987" height="948" style="left:0;top:0"><polygon points="1039,880 1039.0,729.2 1041.5,729.2 1046.6,729.2 1051.8,725.7 1056.9,719.2 1062.1,722.2 1067.2,729.2 1072.4,729.2 1077.5,729.2 1082.7,729.2 1087.8,727.2 1093.0,729.2 1098.1,729.2 1103.2,729.2 1108.4,729.2 1113.6,729.2 1118.7,729.2 1123.9,729.2 1129.0,729.2 1134.2,731.8 1139.3,729.2 1144.5,729.2 1149.6,729.2 1154.8,725.7 1159.9,719.2 1165.1,722.2 1170.2,729.2 1175.4,729.2 1180.5,729.2 1185.7,729.2 1190.8,729.2 1196.0,727.2 1201.1,729.2 1206.2,729.2 1211.4,729.2 1216.6,729.2 1221.7,729.2 1226.9,729.2 1232.0,729.2 1237.2,729.2 1242.3,729.2 1247.5,729.2 1252.6,729.2 1257.8,725.7 1262.9,719.2 1268.1,722.2 1273.2,729.2 1278.4,729.2 1283.5,729.2 1288.7,727.2 1293.8,729.2 1299.0,729.2 1304.1,729.2 1309.2,729.2 1314.4,727.2 1319.6,729.2 1324.7,729.2 1329.9,729.2 1335.0,729.2 1340.2,729.2 1345.3,729.2 1350.5,729.2 1355.6,729.2 1360.8,725.7 1365.9,719.2 1371.1,722.2 1376.2,729.2 1381.4,731.8 1386.5,729.2 1391.7,729.2 1396.8,729.2 1402.0,727.2 1407.1,729.2 1412.2,729.2 1417.4,727.2 1422.6,729.2 1427.7,729.2 1432.9,729.2 1438.0,729.2 1443.2,729.2 1448.3,731.8 1453.5,729.2 1458.6,729.2 1463.8,725.7 1468.9,719.2 1474.1,722.2 1479.2,729.2 1484.4,729.2 1489.5,729.2 1494.7,729.2 1499.8,729.2 1505.0,729.2 1510.1,729.2 1515.2,729.2 1520.4,729.2 1525.6,729.2 1530.7,729.2 1535.9,729.2 1541.0,729.2 1546.2,729.2 1551.3,729.2 1556.5,727.2 1561.6,729.2 1566.8,725.7 1571.9,719.2 1577.1,722.2 1582.2,729.2 1587.4,729.2 1592.5,729.2 1597.7,729.2 1602.8,729.2 1608.0,727.2 1613.1,729.2 1618.2,729.2 1623.4,729.2 1628.6,729.2 1633.7,729.2 1638.9,729.2 1644.0,729.2 1649.2,727.2 1654.3,729.2 1657.0,729.2 1657.0,880" fill="rgb(49,43,38)"/><polygon points="1039,880 1039.0,777.5 1041.5,777.5 1046.6,774.5 1051.8,772.5 1056.9,760.9 1062.1,765.9 1067.2,774.5 1072.4,777.5 1077.5,774.5 1082.7,777.5 1087.8,777.5 1093.0,777.5 1098.1,777.0 1103.2,776.0 1108.4,777.5 1113.6,776.0 1118.7,777.0 1123.9,776.0 1129.0,778.5 1134.2,776.0 1139.3,777.5 1144.5,774.5 1149.6,774.5 1154.8,772.5 1159.9,760.9 1165.1,765.9 1170.2,774.5 1175.4,777.5 1180.5,774.5 1185.7,777.5 1190.8,777.5 1196.0,777.5 1201.1,776.0 1206.2,777.5 1211.4,774.5 1216.6,774.5 1221.7,777.0 1226.9,777.5 1232.0,774.5 1237.2,776.0 1242.3,778.5 1247.5,776.0 1252.6,774.5 1257.8,772.5 1262.9,760.9 1268.1,765.9 1273.2,774.5 1278.4,777.5 1283.5,774.5 1288.7,778.5 1293.8,776.0 1299.0,774.5 1304.1,776.0 1309.2,777.0 1314.4,777.5 1319.6,778.5 1324.7,777.5 1329.9,777.0 1335.0,777.0 1340.2,777.5 1345.3,778.5 1350.5,776.0 1355.6,774.5 1360.8,772.5 1365.9,760.9 1371.1,765.9 1376.2,774.5 1381.4,777.5 1386.5,774.5 1391.7,777.0 1396.8,774.5 1402.0,777.5 1407.1,777.5 1412.2,777.0 1417.4,776.0 1422.6,774.5 1427.7,777.0 1432.9,777.5 1438.0,774.5 1443.2,776.0 1448.3,777.5 1453.5,777.0 1458.6,774.5 1463.8,772.5 1468.9,760.9 1474.1,765.9 1479.2,774.5 1484.4,777.5 1489.5,774.5 1494.7,777.0 1499.8,777.0 1505.0,777.5 1510.1,777.0 1515.2,777.5 1520.4,777.5 1525.6,774.5 1530.7,777.0 1535.9,777.0 1541.0,774.5 1546.2,774.5 1551.3,778.5 1556.5,777.0 1561.6,774.5 1566.8,772.5 1571.9,760.9 1577.1,765.9 1582.2,774.5 1587.4,777.5 1592.5,774.5 1597.7,777.0 1602.8,774.5 1608.0,777.0 1613.1,776.0 1618.2,777.5 1623.4,778.5 1628.6,778.5 1633.7,774.5 1638.9,774.5 1644.0,777.5 1649.2,777.0 1654.3,778.5 1657.0,777.5 1657.0,880" fill="rgb(55,45,45)"/><rect x="1039" y="880" width="621" height="1" fill="rgba(255,255,255,0.12)"/><rect x="1039" y="829" width="621" height="1" fill="rgba(255,255,255,0.12)"/><rect x="1039" y="779" width="621" height="1" fill="rgba(255,255,255,0.12)"/><rect x="1039" y="729" width="621" height="1" fill="rgba(255,255,255,0.12)"/><rect x="1039" y="679" width="621" height="1" fill="rgba(255,255,255,0.12)"/><rect x="1108" y="679" width="1" height="202" fill="rgba(255,255,255,0.12)"/><rect x="1211" y="679" width="1" height="202" fill="rgba(255,255,255,0.12)"/><rect x="1315" y="679" width="1" height="202" fill="rgba(255,255,255,0.12)"/><rect x="1418" y="679" width="1" height="202" fill="rgba(255,255,255,0.12)"/><rect x="1522" y="679" width="1" height="202" fill="rgba(255,255,255,0.12)"/><rect x="1626" y="679" width="1" height="202" fill="rgba(255,255,255,0.12)"/><polyline points="1039.0,729.2 1041.5,729.2 1046.6,729.2 1051.8,725.7 1056.9,719.2 1062.1,722.2 1067.2,729.2 1072.4,729.2 1077.5,729.2 1082.7,729.2 1087.8,727.2 1093.0,729.2 1098.1,729.2 1103.2,729.2 1108.4,729.2 1113.6,729.2 1118.7,729.2 1123.9,729.2 1129.0,729.2 1134.2,731.8 1139.3,729.2 1144.5,729.2 1149.6,729.2 1154.8,725.7 1159.9,719.2 1165.1,722.2 1170.2,729.2 1175.4,729.2 1180.5,729.2 1185.7,729.2 1190.8,729.2 1196.0,727.2 1201.1,729.2 1206.2,729.2 1211.4,729.2 1216.6,729.2 1221.7,729.2 1226.9,729.2 1232.0,729.2 1237.2,729.2 1242.3,729.2 1247.5,729.2 1252.6,729.2 1257.8,725.7 1262.9,719.2 1268.1,722.2 1273.2,729.2 1278.4,729.2 1283.5,729.2 1288.7,727.2 1293.8,729.2 1299.0,729.2 1304.1,729.2 1309.2,729.2 1314.4,727.2 1319.6,729.2 1324.7,729.2 1329.9,729.2 1335.0,729.2 1340.2,729.2 1345.3,729.2 1350.5,729.2 1355.6,729.2 1360.8,725.7 1365.9,719.2 1371.1,722.2 1376.2,729.2 1381.4,731.8 1386.5,729.2 1391.7,729.2 1396.8,729.2 1402.0,727.2 1407.1,729.2 1412.2,729.2 1417.4,727.2 1422.6,729.2 1427.7,729.2 1432.9,729.2 1438.0,729.2 1443.2,729.2 1448.3,731.8 1453.5,729.2 1458.6,729.2 1463.8,725.7 1468.9,719.2 1474.1,722.2 1479.2,729.2 1484.4,729.2 1489.5,729.2 1494.7,729.2 1499.8,729.2 1505.0,729.2 1510.1,729.2 1515.2,729.2 1520.4,729.2 1525.6,729.2 1530.7,729.2 1535.9,729.2 1541.0,729.2 1546.2,729.2 1551.3,729.2 1556.5,727.2 1561.6,729.2 1566.8,725.7 1571.9,719.2 1577.1,722.2 1582.2,729.2 1587.4,729.2 1592.5,729.2 1597.7,729.2 1602.8,729.2 1608.0,727.2 1613.1,729.2 1618.2,729.2 1623.4,729.2 1628.6,729.2 1633.7,729.2 1638.9,729.2 1644.0,729.2 1649.2,727.2 1654.3,729.2 1657.0,729.2" fill="none" stroke="#eab839" stroke-width="1.3" stroke-linejoin="round"/><polyline points="1039.0,777.5 1041.5,777.5 1046.6,774.5 1051.8,772.5 1056.9,760.9 1062.1,765.9 1067.2,774.5 1072.4,777.5 1077.5,774.5 1082.7,777.5 1087.8,777.5 1093.0,777.5 1098.1,777.0 1103.2,776.0 1108.4,777.5 1113.6,776.0 1118.7,777.0 1123.9,776.0 1129.0,778.5 1134.2,776.0 1139.3,777.5 1144.5,774.5 1149.6,774.5 1154.8,772.5 1159.9,760.9 1165.1,765.9 1170.2,774.5 1175.4,777.5 1180.5,774.5 1185.7,777.5 1190.8,777.5 1196.0,777.5 1201.1,776.0 1206.2,777.5 1211.4,774.5 1216.6,774.5 1221.7,777.0 1226.9,777.5 1232.0,774.5 1237.2,776.0 1242.3,778.5 1247.5,776.0 1252.6,774.5 1257.8,772.5 1262.9,760.9 1268.1,765.9 1273.2,774.5 1278.4,777.5 1283.5,774.5 1288.7,778.5 1293.8,776.0 1299.0,774.5 1304.1,776.0 1309.2,777.0 1314.4,777.5 1319.6,778.5 1324.7,777.5 1329.9,777.0 1335.0,777.0 1340.2,777.5 1345.3,778.5 1350.5,776.0 1355.6,774.5 1360.8,772.5 1365.9,760.9 1371.1,765.9 1376.2,774.5 1381.4,777.5 1386.5,774.5 1391.7,777.0 1396.8,774.5 1402.0,777.5 1407.1,777.5 1412.2,777.0 1417.4,776.0 1422.6,774.5 1427.7,777.0 1432.9,777.5 1438.0,774.5 1443.2,776.0 1448.3,777.5 1453.5,777.0 1458.6,774.5 1463.8,772.5 1468.9,760.9 1474.1,765.9 1479.2,774.5 1484.4,777.5 1489.5,774.5 1494.7,777.0 1499.8,777.0 1505.0,777.5 1510.1,777.0 1515.2,777.5 1520.4,777.5 1525.6,774.5 1530.7,777.0 1535.9,777.0 1541.0,774.5 1546.2,774.5 1551.3,778.5 1556.5,777.0 1561.6,774.5 1566.8,772.5 1571.9,760.9 1577.1,765.9 1582.2,774.5 1587.4,777.5 1592.5,774.5 1597.7,777.0 1602.8,774.5 1608.0,777.0 1613.1,776.0 1618.2,777.5 1623.4,778.5 1628.6,778.5 1633.7,774.5 1638.9,774.5 1644.0,777.5 1649.2,777.0 1654.3,778.5 1657.0,777.5" fill="none" stroke="#705da0" stroke-width="1.3" stroke-linejoin="round"/><polyline points="1055.0,879 1057.5,878 1062.5,878 1065.0,879" fill="none" stroke="#c15c17" stroke-width="1.2"/><polyline points="1105.6,879 1108.1,878 1113.1,878 1115.6,879" fill="none" stroke="#c15c17" stroke-width="1.2"/><polyline points="1073.0,879 1077.0,876.8 1081.0,879" fill="none" stroke="#c15c17" stroke-width="1.2"/><polyline points="1158.5,879 1161.0,878 1166.0,878 1168.5,879" fill="none" stroke="#c15c17" stroke-width="1.2"/><polyline points="1209.1,879 1211.6,878 1216.6,878 1219.1,879" fill="none" stroke="#c15c17" stroke-width="1.2"/><polyline points="1176.5,879 1180.5,876.8 1184.5,879" fill="none" stroke="#c15c17" stroke-width="1.2"/><polyline points="1262.0,879 1264.5,878 1269.5,878 1272.0,879" fill="none" stroke="#c15c17" stroke-width="1.2"/><polyline points="1312.6,879 1315.1,878 1320.1,878 1322.6,879" fill="none" stroke="#c15c17" stroke-width="1.2"/><polyline points="1280.0,879 1284.0,876.8 1288.0,879" fill="none" stroke="#c15c17" stroke-width="1.2"/><polyline points="1365.5,879 1368.0,878 1373.0,878 1375.5,879" fill="none" stroke="#c15c17" stroke-width="1.2"/><polyline points="1416.1,879 1418.6,878 1423.6,878 1426.1,879" fill="none" stroke="#c15c17" stroke-width="1.2"/><polyline points="1383.5,879 1387.5,876.8 1391.5,879" fill="none" stroke="#c15c17" stroke-width="1.2"/><polyline points="1469.0,879 1471.5,878 1476.5,878 1479.0,879" fill="none" stroke="#c15c17" stroke-width="1.2"/><polyline points="1519.6,879 1522.1,878 1527.1,878 1529.6,879" fill="none" stroke="#c15c17" stroke-width="1.2"/><polyline points="1487.0,879 1491.0,876.8 1495.0,879" fill="none" stroke="#c15c17" stroke-width="1.2"/><polyline points="1572.5,879 1575.0,878 1580.0,878 1582.5,879" fill="none" stroke="#c15c17" stroke-width="1.2"/><polyline points="1623.1,879 1625.6,878 1630.6,878 1633.1,879" fill="none" stroke="#c15c17" stroke-width="1.2"/><polyline points="1590.5,879 1594.5,876.8 1598.5,879" fill="none" stroke="#c15c17" stroke-width="1.2"/><rect x="1039" y="879" width="618" height="2" fill="#6b3d80"/><rect x="1092" y="679" width="1" height="202" fill="#8b0e0e"/></svg>
<div class="t" style="right:953.5px;top:873.3px;font-size:12px;color:#d8d9da;font-weight:normal;">0</div>
<div class="t" style="right:953.5px;top:822.3px;font-size:12px;color:#d8d9da;font-weight:normal;">1.0</div>
<div class="t" style="right:953.5px;top:772.3px;font-size:12px;color:#d8d9da;font-weight:normal;">2.0</div>
<div class="t" style="right:953.5px;top:722.3px;font-size:12px;color:#d8d9da;font-weight:normal;">3.0</div>
<div class="t" style="right:953.5px;top:672.3px;font-size:12px;color:#d8d9da;font-weight:normal;">4.0</div>
<div class="t" style="left:808.5px;width:600px;text-align:center;top:886.8px;font-size:12px;color:#d8d9da;font-weight:normal;letter-spacing:-0.3px;">18:00</div>
<div class="t" style="left:911.5px;width:600px;text-align:center;top:886.8px;font-size:12px;color:#d8d9da;font-weight:normal;letter-spacing:-0.3px;">18:10</div>
<div class="t" style="left:1015.5px;width:600px;text-align:center;top:886.8px;font-size:12px;color:#d8d9da;font-weight:normal;letter-spacing:-0.3px;">18:20</div>
<div class="t" style="left:1118.5px;width:600px;text-align:center;top:886.8px;font-size:12px;color:#d8d9da;font-weight:normal;letter-spacing:-0.3px;">18:30</div>
<div class="t" style="left:1222.5px;width:600px;text-align:center;top:886.8px;font-size:12px;color:#d8d9da;font-weight:normal;letter-spacing:-0.3px;">18:40</div>
<div class="t" style="left:1326.5px;width:600px;text-align:center;top:886.8px;font-size:12px;color:#d8d9da;font-weight:normal;letter-spacing:-0.3px;">18:50</div>
<div class="t" style="right:103.0px;top:677.8px;font-size:12px;color:#33b5e5;font-weight:normal;-webkit-text-stroke:0.3px #33b5e5;">max</div>
<div class="t" style="right:54.0px;top:677.8px;font-size:12px;color:#33b5e5;font-weight:normal;-webkit-text-stroke:0.3px #33b5e5;">current</div>
<svg width="8" height="6" style="left:1932.5px;top:683.5px"><polygon points="0,0 7,0 3.5,4" fill="#33b5e5"/></svg>
<div style="position:absolute;left:1681px;top:695px;width:269px;height:26px;background:#232427;"></div>
<div style="position:absolute;left:1691px;top:709px;width:12px;height:3px;background:#eab839;border-radius:1.5px;"></div>
<div class="t" style="left:1710.0px;top:700.8px;font-size:12px;color:#d8d9da;font-weight:normal;">batch_index_scan</div>
<div class="t" style="right:103.0px;top:700.8px;font-size:12px;color:#d8d9da;font-weight:normal;">3.2</div>
<div class="t" style="right:47.0px;top:700.8px;font-size:12px;color:#d8d9da;font-weight:normal;">3.0</div>
<div style="position:absolute;left:1691px;top:735px;width:12px;height:3px;background:#705da0;border-radius:1.5px;"></div>
<div class="t" style="left:1710.0px;top:726.8px;font-size:12px;color:#d8d9da;font-weight:normal;">batch_table_scan</div>
<div class="t" style="right:103.0px;top:726.8px;font-size:12px;color:#d8d9da;font-weight:normal;">2.4</div>
<div class="t" style="right:47.0px;top:726.8px;font-size:12px;color:#d8d9da;font-weight:normal;">2.0</div>
<div style="position:absolute;left:1681px;top:747px;width:269px;height:26px;background:#232427;"></div>
<div style="position:absolute;left:1691px;top:761px;width:12px;height:3px;background:#584477;border-radius:1.5px;"></div>
<div class="t" style="left:1710.0px;top:752.8px;font-size:12px;color:#d8d9da;font-weight:normal;">top_n</div>
<div class="t" style="right:103.0px;top:752.8px;font-size:12px;color:#d8d9da;font-weight:normal;">0</div>
<div class="t" style="right:47.0px;top:752.8px;font-size:12px;color:#d8d9da;font-weight:normal;">0</div>
<div style="position:absolute;left:1691px;top:787px;width:12px;height:3px;background:#6d1f62;border-radius:1.5px;"></div>
<div class="t" style="left:1710.0px;top:778.8px;font-size:12px;color:#d8d9da;font-weight:normal;">table_scan</div>
<div class="t" style="right:103.0px;top:778.8px;font-size:12px;color:#d8d9da;font-weight:normal;">0</div>
<div class="t" style="right:47.0px;top:778.8px;font-size:12px;color:#d8d9da;font-weight:normal;">0</div>
<div style="position:absolute;left:1681px;top:799px;width:269px;height:26px;background:#232427;"></div>
<div style="position:absolute;left:1691px;top:813px;width:12px;height:3px;background:#0a437c;border-radius:1.5px;"></div>
<div class="t" style="left:1710.0px;top:804.8px;font-size:12px;color:#d8d9da;font-weight:normal;">stream_aggr</div>
<div class="t" style="right:103.0px;top:804.8px;font-size:12px;color:#d8d9da;font-weight:normal;">0</div>
<div class="t" style="right:47.0px;top:804.8px;font-size:12px;color:#d8d9da;font-weight:normal;">0</div>
<div style="position:absolute;left:1691px;top:839px;width:12px;height:3px;background:#890f02;border-radius:1.5px;"></div>
<div class="t" style="left:1710.0px;top:830.8px;font-size:12px;color:#d8d9da;font-weight:normal;">selection</div>
<div class="t" style="right:103.0px;top:830.8px;font-size:12px;color:#d8d9da;font-weight:normal;">0</div>
<div class="t" style="right:47.0px;top:830.8px;font-size:12px;color:#d8d9da;font-weight:normal;">0</div>
<div style="position:absolute;left:1681px;top:851px;width:269px;height:26px;background:#232427;"></div>
<div style="position:absolute;left:1691px;top:865px;width:12px;height:3px;background:#c15c17;border-radius:1.5px;"></div>
<div class="t" style="left:1710.0px;top:856.8px;font-size:12px;color:#d8d9da;font-weight:normal;">limit</div>
<div class="t" style="right:103.0px;top:856.8px;font-size:12px;color:#d8d9da;font-weight:normal;">0</div>
<div class="t" style="right:47.0px;top:856.8px;font-size:12px;color:#d8d9da;font-weight:normal;">0</div>
<div style="position:absolute;left:1691px;top:891px;width:12px;height:3px;background:#447ebc;border-radius:1.5px;"></div>
<div class="t" style="left:1710.0px;top:882.8px;font-size:12px;color:#d8d9da;font-weight:normal;">index_scan</div>
<div class="t" style="right:103.0px;top:882.8px;font-size:12px;color:#d8d9da;font-weight:normal;">0</div>
<div class="t" style="right:47.0px;top:882.8px;font-size:12px;color:#d8d9da;font-weight:normal;">0</div>
<div style="position:absolute;left:1949px;top:678px;width:6px;height:116px;background:#3a3b45;border-radius:3px;"></div>
<div class="panel" style="left:17px;top:923px;width:971px;height:60px;"></div>
<div class="panel" style="left:1000px;top:923px;width:971px;height:60px;"></div>
<div class="t" style="left:202.5px;width:600px;text-align:center;top:927.7px;font-size:14px;color:#d8d9da;font-weight:bold;transform:scaleX(0.865);transform-origin:300px 0;">Total Ops Details (Table Scan)</div>
<div class="t" style="left:1185.5px;width:600px;text-align:center;top:927.7px;font-size:14px;color:#d8d9da;font-weight:bold;transform:scaleX(0.865);transform-origin:300px 0;">Total Ops Details (Index Scan)</div>
</body></html>
